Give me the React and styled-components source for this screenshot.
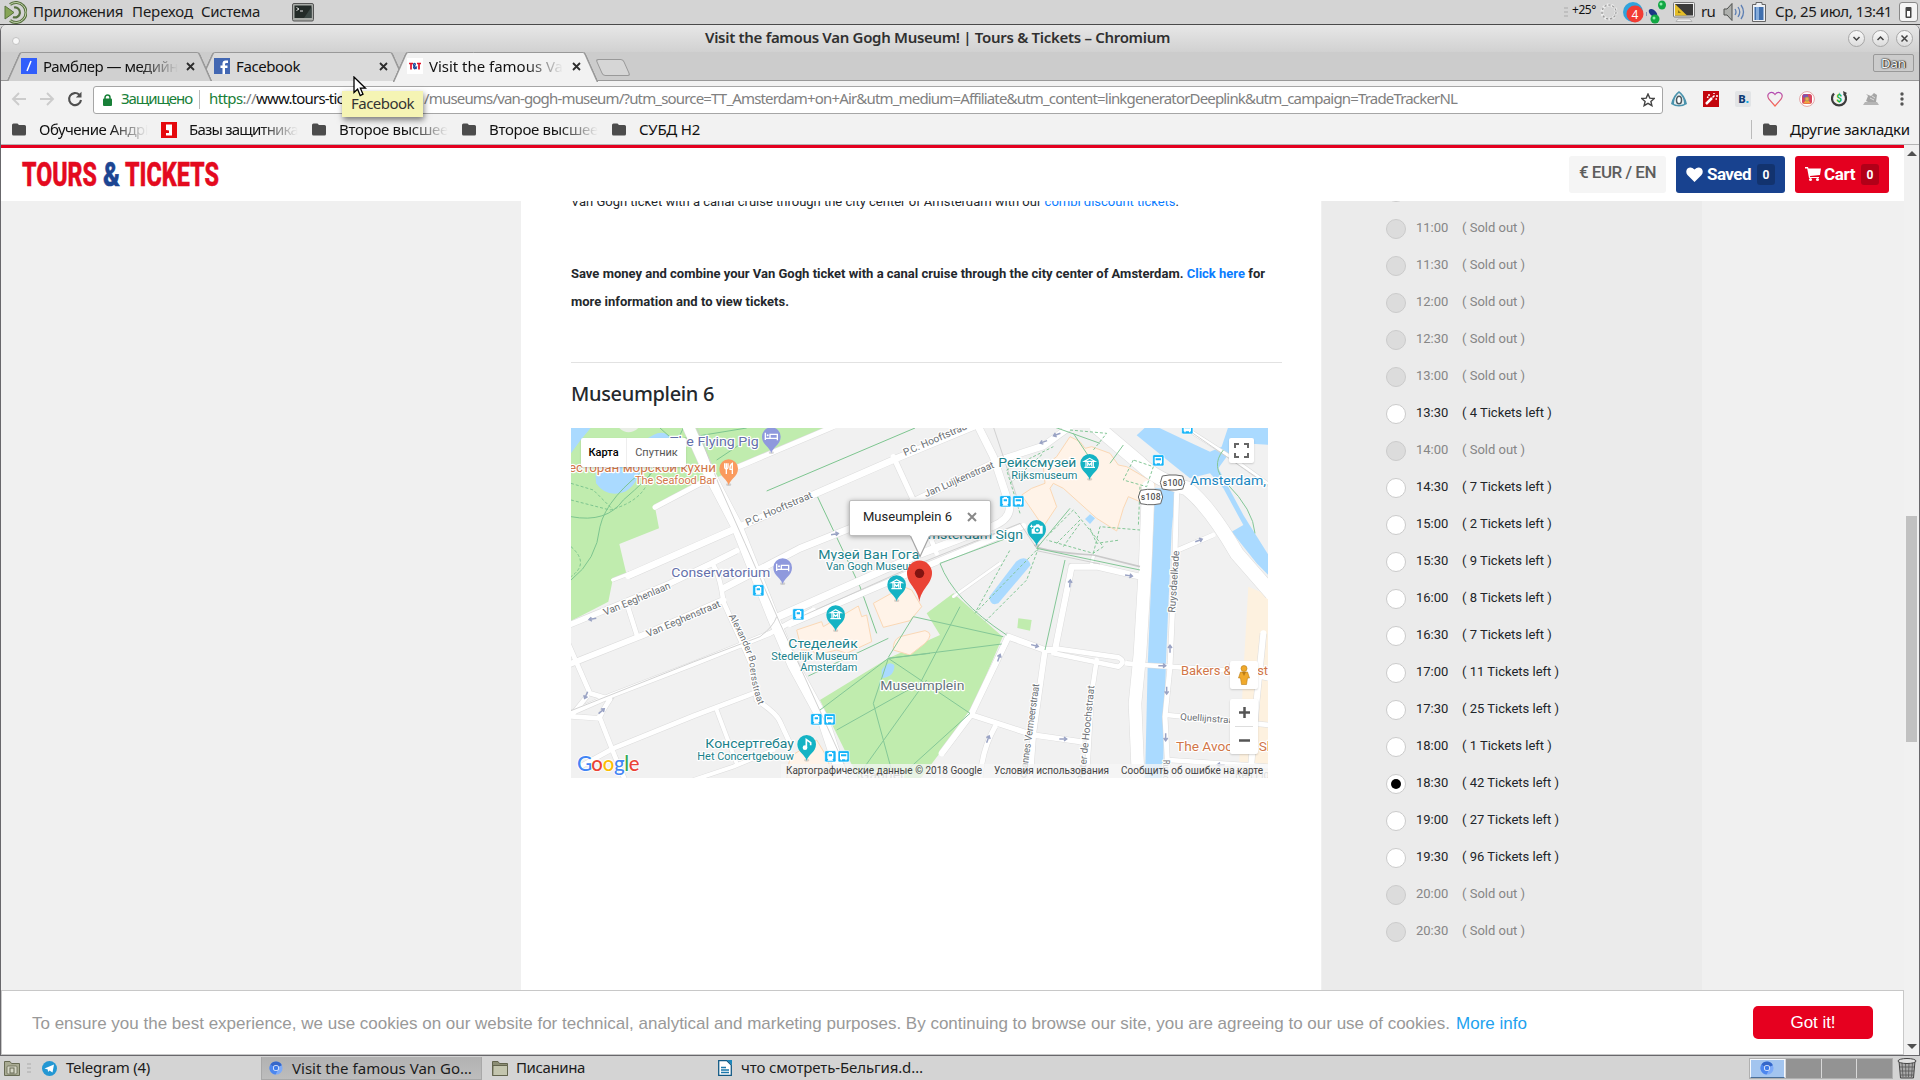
import React, { useLayoutEffect, useRef, useState } from "react";
import styled, { createGlobalStyle, css } from "styled-components";

const UI = `"Noto Sans", "Open Sans", sans-serif`;
const WEB = `Roboto, "Liberation Sans", sans-serif`;

const Global = createGlobalStyle`
  * { box-sizing: border-box; }
  html, body { margin: 0; padding: 0; }
  body { width: 1920px; height: 1080px; overflow: hidden; background: #d4d4d4; }
  p, h2 { margin: 0; }
`;

/* ---------- text that keeps a given width ---------- */
const FitBox = styled.span`
  display: block;
  flex: none;
  width: ${(p) => p.$w}px;
  white-space: pre;
  overflow: visible;
  ${(p) => p.$fade && css`
    overflow: hidden;
    mask-image: linear-gradient(to right, #000 calc(100% - 38px), transparent);
  `}
`;
const FitInner = styled.span`
  display: inline-block;
  white-space: pre;
`;
function Fit({ w, children, fade, className }) {
  const ref = useRef(null);
  const [spacing, setSpacing] = useState(0);
  useLayoutEffect(() => {
    const el = ref.current;
    const natural = el.getBoundingClientRect().width;
    setSpacing((w - natural) / el.textContent.length);
  }, [w]);
  return (
    <FitBox $w={w} $fade={fade} className={className}>
      <FitInner ref={ref} style={{ letterSpacing: spacing }}>{children}</FitInner>
    </FitBox>
  );
}

/* ---------- desktop ---------- */
const Desktop = styled.div`
  width: 1920px;
  height: 1080px;
  display: flex;
  flex-direction: column;
  background: #d4d4d4;
  font-family: ${UI};
  position: relative;
`;
const Panel = styled.div`
  height: ${(p) => p.$h}px;
  flex: none;
  display: flex;
  align-items: center;
  background: #d4d4d4;
  color: #1c1c1c;
  font-size: 15px;
  line-height: 22px;
  & > span { padding-bottom: 2px; }
`;
const MenuPanel = styled(Panel)`
  border-bottom: 1px solid #4a4a4a;
  padding-left: 4px;
  position: relative;
`;
const MenuItem = styled(Fit)`
  margin-left: ${(p) => p.gap}px;
`;
const Push = styled.div`flex: 1;`;
const Gap = styled.div`flex: none; width: ${(p) => p.$w}px;`;
const Icon = styled.svg`
  flex: none;
  display: block;
  width: ${(p) => p.$w || 16}px;
  height: ${(p) => p.$h || p.$w || 16}px;
`;
const TinyText = styled(Fit)`font-size: 12px; line-height: 18px; padding-bottom: 4px !important; color: #111;`;

/* ---------- window ---------- */
const Window = styled.div`
  height: 1031px;
  flex: none;
  display: flex;
  flex-direction: column;
  border: solid #68676b;
  border-width: 0 1px 1px 1px;
  border-radius: 6px 6px 0 0;
  overflow: hidden;
  background: #f2f2f2;
`;
const TitleBar = styled.div`
  height: 27px;
  flex: none;
  display: flex;
  align-items: center;
  background: linear-gradient(#e7e7e7, #d1d1d1);
  padding: 0 6px 0 11px;
`;
const TitleDot = styled.div`
  width: 8px; height: 8px; border-radius: 50%;
  background: #f8f8f8; border: 1px solid #c2c2c2; margin-top: 4px;
`;
const Title = styled(Fit)`
  margin-left: 685px;
  padding-bottom: 4px;
  font-size: 15px;
  font-weight: 600;
  line-height: 22px;
  color: #303030;
`;
const WinButton = styled.div`
  width: 17px; height: 17px; margin-left: 7px;
  border-radius: 50%;
  border: 1px solid #a6a6a6;
  background: linear-gradient(#fafafa, #dcdcdc);
  display: flex; align-items: center; justify-content: center;
`;
const TabStrip = styled.div`
  height: 29px;
  flex: none;
  display: flex;
  background: #ccc;
  border-bottom: 1px solid #999;
  padding: 0 5px 0 6px;
`;
const Tab = styled.div`
  width: 193px;
  height: 29px;
  position: relative;
  display: flex;
  align-items: center;
  padding: 0 0 1px 14px;
  font-size: 15px;
  line-height: 28px;
  color: #111;
  z-index: ${(p) => p.$z};
  &::before, &::after {
    content: "";
    position: absolute;
    z-index: -1;
    top: 0;
    height: ${(p) => (p.$active ? 29 : 28)}px;
    border-top: 1px solid #999;
    background: ${(p) => (p.$active ? "#f2f2f2" : p.$hover ? "#dadada" : "#d0d0d0")};
  }
  &::before { left: 6px; width: 110px; border-left: 2px solid #999; transform: skewX(-24deg); border-top-left-radius: 3px; }
  &::after { right: -6px; width: 110px; border-right: 2px solid #999; transform: skewX(24deg); border-top-right-radius: 3px; }
`;
const TabTitle = styled(Fit)`margin-left: 6px;`;
const NewTab = styled.div`
  width: 28px; height: 17px; margin: 7px 0 0 13px;
  border: 1px solid #999; border-radius: 3px;
  background: #d6d6d6;
  transform: skewX(24deg);
`;
const Profile = styled.div`
  width: 41px; height: 18px; margin-top: 2px;
  border: 1px solid #999; border-radius: 2px;
  color: #f4f4f4; font-size: 13px; line-height: 16px; text-align: center;
  text-shadow: 0 0 1px #222, 0 0 2px #222, 1px 0 1px #333;
`;
const Toolbar = styled.div`
  height: 36px;
  flex: none;
  display: flex;
  align-items: center;
  padding: 0 0 0 10px;
  background: #f2f2f2;
`;
const Omnibox = styled.div`
  width: 1570px; height: 28px; margin: 1px 8px 0 10px;
  border: 1px solid #a6a6a6; border-radius: 3px;
  background: #fff;
  display: flex; align-items: center;
  padding: 0 7px 0 9px;
  font-size: 15px; line-height: 22px;
  color: #808080;
  & > span { padding-bottom: 3px; }
`;
const Secure = styled(Fit)`margin-left: 9px; color: #188038;`;
const Scheme = styled(Fit)`b { font-weight: 400; color: #188038; }`;
const Host = styled(Fit)`color: #111;`;
const Rule = styled.div`
  width: 1px; height: ${(p) => p.$h}px; background: #bbb; flex: none;
  margin: 0 ${(p) => p.$r}px 0 ${(p) => p.$l}px;
`;
const Extensions = styled.div`
  display: flex; align-items: center; gap: 16px;
`;
const BookmarkBar = styled.div`
  height: 28px;
  flex: none;
  display: flex;
  align-items: center;
  padding: 0 9px 2px 11px;
  font-size: 15px;
  line-height: 22px;
  color: #111;
  border-bottom: 1px solid #b4b4b4;
  & > span { padding-bottom: 2px; }
`;
const BookmarkText = styled(Fit)`margin: 0 14px 0 13px;`;
const SiteIcon = styled(Icon)`margin: 0 -1px;`;

/* ---------- page ---------- */
const Viewport = styled.div`
  flex: 1;
  display: flex;
  min-height: 0;
`;
const Page = styled.div`
  width: 1903px;
  display: flex;
  flex-direction: column;
  background: #f0f0f0;
  font-family: ${WEB};
`;
const SiteHeader = styled.header`
  height: 56px;
  flex: none;
  border-top: 3px solid #e4001f;
  background: #fff;
  display: flex;
  align-items: flex-start;
  padding: 8px 15px 0 21px;
`;
const Logo = styled.svg`display: block; width: 198px; height: 26px; margin-top: 5px; overflow: visible;`;
const HeaderButton = styled.div`
  width: ${(p) => p.$w}px; height: 37px;
  margin-left: 10px;
  border-radius: 3px;
  background: ${(p) => p.$bg};
  color: ${(p) => p.$fg || "#fff"};
  display: flex; align-items: center;
  padding: 0 10px ${(p) => (p.$fg ? 5 : 1)}px;
  font-size: 17px; font-weight: ${(p) => (p.$fg ? 500 : 700)};
  line-height: 30px;
`;
const Count = styled.span`
  width: 18px; height: 21px; margin-left: auto;
  border-radius: 3px;
  background: rgba(0, 0, 0, 0.22);
  font-size: 12px; line-height: 22px; text-align: center;
`;
const Columns = styled.div`
  height: 789px;
  flex: none;
  display: flex;
  padding-left: 520px;
  overflow: hidden;
`;
const Article = styled.main`
  width: 800px;
  background: #fff;
  padding: 0 39px 0 50px;
  color: #24282c;
`;
const Para = styled.p`
  height: 28px;
  margin-top: ${(p) => p.$mt || 0}px;
  font-size: 13px;
  line-height: 28px;
  font-weight: ${(p) => (p.$bold ? 700 : 400)};
  white-space: nowrap;
`;
const Link = styled.a`color: #0a7cff;`;
const Divider = styled.div`height: 1px; background: #e2e2e2; margin-top: 46px;`;
const Heading = styled.h2`
  margin-top: 17px;
  font-family: ${UI};
  font-size: 20px; line-height: 28px; font-weight: 500;
`;
const MapBox = styled.div`
  position: relative;
  width: 697px; height: 350px; margin-top: 20px;
  overflow: hidden;
  font-family: ${WEB};
`;
const MapSvg = styled.svg`display: block; width: 697px; height: 350px;`;
const MapControl = styled.div`
  position: absolute;
  left: ${(p) => p.$x}px; top: ${(p) => p.$y}px;
  width: ${(p) => p.$w}px; height: ${(p) => p.$h}px;
  background: #fff; border-radius: 2px;
  box-shadow: 0 1px 2px rgba(0, 0, 0, 0.16);
  display: flex; flex-direction: ${(p) => (p.$col ? "column" : "row")};
  align-items: center; justify-content: center;
  font-size: 11px; color: #565656;
`;
const TypeButton = styled.div`
  width: ${(p) => p.$w}px; height: 29px; line-height: 29px;
  text-align: center;
  ${(p) => p.$on && css`color: #000; font-weight: 500; border-right: 1px solid #eee;`}
`;
const ZoomDivider = styled.div`width: 18px; height: 1px; background: #ddd; margin: 8px 0;`;
const InfoWindow = styled(MapControl)`
  border: 1px solid #bdbdbd;
  box-shadow: 0 1px 5px rgba(0, 0, 0, 0.35);
  justify-content: flex-start;
  padding: 0 12px 3px 13px;
  color: #222;
  font-size: 13px;
  gap: 15px;
`;
const Tail = styled.svg`
  position: absolute;
  left: 336px; top: 105px;
  width: 28px; height: 26px;
`;
const Attribution = styled.div`
  position: absolute;
  right: 0; bottom: 0;
  height: 14px; width: 487px;
  background: rgba(245, 245, 245, 0.75);
  display: flex; align-items: center; gap: 12px;
  padding-left: 5px;
  font-size: 10px; color: #444; line-height: 14px;
`;
const Sidebar = styled.aside`
  width: 380px;
  margin-left: 1px;
  background: #ebebeb;
  padding: 0 0 0 64px;
`;
const Slots = styled.div`
  display: flex; flex-direction: column; gap: 17px;
  margin-top: -19px;
`;
const Slot = styled.div`
  height: 20px;
  display: flex; align-items: center;
  font-size: 13px; line-height: 16px;
  color: ${(p) => (p.$off ? "#868686" : "#212529")};
  & > span { margin-bottom: 2px; }
`;
const Radio = styled.i`
  width: 20px; height: 20px; margin-right: 10px;
  border-radius: 50%;
  border: 1px solid #cbcbcb;
  background: ${(p) => (p.$off ? "#dcdcdc" : "#fff")};
  display: flex; align-items: center; justify-content: center;
  &::after {
    content: "";
    width: 10px; height: 10px; border-radius: 50%;
    background: ${(p) => (p.$on ? "#000" : "transparent")};
  }
`;
const Time = styled.span`width: 46px;`;
const CookieBar = styled.div`
  height: 65px;
  flex: none;
  background: #fff;
  border: 1px solid #c8c8c8;
  display: flex; align-items: center;
  padding: 3px 30px 0 30px;
  font-family: "Liberation Sans", sans-serif;
  font-size: 17px;
  color: #999;
`;
const MoreInfo = styled(Fit)`margin-left: 6px; color: #21a2ef;`;
const GotIt = styled.div`
  width: 120px; height: 33px; margin: 0 0 4px auto;
  padding-top: 1px;
  border-radius: 5px; background: #e6001f; color: #fff;
  display: flex; align-items: center; justify-content: center;
`;
const Scrollbar = styled.div`
  width: 15px;
  background: #f1f1f1;
  display: flex; flex-direction: column; align-items: center;
  padding: 6px 0 6px;
`;
const Thumb = styled.div`
  width: 11px; height: 226px; margin: 360px 0 auto; background: #c1c1c1;
`;
const Arrow = styled.div`
  border: 5px solid transparent;
  ${(p) => (p.$up ? "border-bottom-color: #505050; border-top: 0;" : "border-top-color: #505050; border-bottom: 0;")}
`;

/* ---------- bottom panel ---------- */
const Task = styled.div`
  height: 23px; width: ${(p) => p.$w}px;
  display: flex; align-items: center; gap: ${(p) => p.$gap || 10}px;
  padding-left: ${(p) => p.$pl || 0}px;
  & > span { padding-bottom: 2px; }
  ${(p) => p.$active && css`
    background: linear-gradient(#b2b2b2, #bdbdbd);
    border: 1px solid #a8a8a8;
    border-top: 0;
    & > span { padding-bottom: 0; }
  `}
`;
const Workspaces = styled.div`
  width: 144px; height: 21px;
  display: grid; grid-template-columns: repeat(4, 1fr); gap: 1px;
  background: #d8d8d8; border: 1px solid #b0b0b0;
`;
const Workspace = styled.div`
  background: ${(p) => (p.$on ? "#a3c5ef" : "#939393")};
  ${(p) => p.$on && css`border: 1px solid #f6f9fd; border-bottom-color: #4a6f99;`}
  display: flex; align-items: center; justify-content: center;
`;

/* ---------- overlays ---------- */
const Tooltip = styled.div`
  position: absolute; left: 342px; top: 91px; z-index: 10;
  width: 81px; height: 26px; padding-left: 9px;
  background: #f5f4b4; color: #333;
  font-size: 15px; line-height: 24px;
  box-shadow: 1px 3px 6px rgba(0, 0, 0, 0.5);
`;
const Cursor = styled.svg`
  position: absolute; left: 353px; top: 76px; z-index: 11;
  width: 14px; height: 21px;
`;

/* ---------- icons ---------- */
const FolderIcon = () => (
  <Icon $w={14} $h={13} viewBox="0 0 14 13"><path d="M0 2Q0 .5 1.500.5H5.500L7 2H12.500Q14 2 14 3.500V11Q14 12.500 12.500 12.500H1.500Q0 12.500 0 11Z" fill="#4c4c4c" /></Icon>
);
const CloseX = () => (
  <Icon $w={9} viewBox="0 0 9 9"><path d="M1 1L8 8M8 1L1 8" stroke="#2c2c2c" strokeWidth="1.800" /></Icon>
);
const ChromiumIcon = ({ size }) => (
  <Icon $w={size} viewBox="0 0 16 16">
    <circle cx="8" cy="8" r="7.500" fill="#7eabf8" />
    <path d="M8 8L1.500 4.500A7.500 7.500 0 0 1 14.700 4.800Z" fill="#3567c9" />
    <path d="M8 8L1.500 4.200A7.500 7.500 0 0 0 7.600 15.500L10.500 9.500Z" fill="#4c86ee" />
    <circle cx="8" cy="8" r="3.500" fill="#e3ecfb" /><circle cx="8" cy="8" r="2.600" fill="#3f7be6" />
  </Icon>
);
const MateIcon = () => (
  <Icon $w={23} viewBox="0 0 23 23" fill="none" stroke="#6d8a4f" strokeWidth="2.200">
    <path d="M1 5V18L10 11.500Z" fill="#87a556" stroke="#59743d" strokeWidth="1" />
    <path d="M6 3.500A10 10 0 1 1 6 19.500" stroke="#56703e" strokeWidth="3" />
    <path d="M6 3.500A10 10 0 1 1 6 19.500" stroke="#c5d6ae" strokeWidth="1" />
    <path d="M10 6.500A5 5 0 1 1 9 16" stroke="#56703e" />
  </Icon>
);
const TerminalIcon = () => (
  <Icon $w={22} $h={19} viewBox="0 0 22 19">
    <rect x=".5" y=".5" width="21" height="17.500" rx="1.500" fill="#a9aca8" stroke="#555" />
    <rect x="2.500" y="2.500" width="17" height="12.500" fill="#232b28" />
    <path d="M4.500 4.500L7 6L4.500 7.500M8 8H11" stroke="#e5e5e5" fill="none" />
    <path d="M12 15L19.500 4V15Z" fill="#3b4744" />
  </Icon>
);

/* ---------- map ---------- */
const Halo = styled.text`
  paint-order: stroke;
  stroke: #fff;
  stroke-width: 7px;
  stroke-linejoin: round;
  font-family: ${WEB};
  font-size: ${(p) => p.$s}px;
  fill: ${(p) => p.$c};
`;
const Label = ({ x, y, w, s, c, children, ...rest }) => (
  <Halo x={x} y={y} textLength={w} lengthAdjust="spacingAndGlyphs" $s={s} $c={c} {...rest}>{children}</Halo>
);
const Pin = ({ x, y, c, children }) => (
  <g transform={`translate(${x} ${y})`}>
    <ellipse cx="0" cy="48" rx="8" ry="4" fill="#000" opacity=".15" />
    <path d="M0 50C-3 32-28 24-28 0A28 28 0 0 1 28 0C28 24 3 32 0 50Z" fill={c} />
    {children}
  </g>
);
const Museum = () => (
  <g fill="none" stroke="#fff" strokeWidth="3.500">
    <path d="M-16 -6L0 -15L16 -6ZM-11 -4V11M11 -4V11M-16 12H16M-6 9V-2L0 5L6 -2V9" />
  </g>
);
const Bed = () => (
  <g fill="none" stroke="#fff" strokeWidth="4"><path d="M-18 -12V10M-18 5H18V-7H-4V4M18 5V11" /><circle cx="-11" cy="-4" r="3" fill="#fff" stroke="none" /></g>
);
const Stop = ({ x, y, bus }) => (
  <g transform={`translate(${x} ${y})`}>
    <rect x="-17" y="-17" width="34" height="34" rx="4" fill="#14b4f8" stroke="#fff" strokeWidth="2" />
    {bus
      ? <path d="M-11 -10H11V9H-11ZM-8 -6V0H8V-6ZM-9 9V12H-5V9M5 9V12H9V9" fill="#fff" fillRule="evenodd" />
      : <path d="M-5 -13H5V-10H9V7L6 9L9 13H-9L-6 9L-9 7V-10H-5ZM-5 -6V0H5V-6Z" fill="#fff" fillRule="evenodd" />}
  </g>
);
const Arr = ({ x, y, r }) => (
  <path transform={`translate(${x} ${y}) rotate(${r})`} d="M-12 0H10M2 -6L10 0L2 6" fill="none" stroke="#9aa3c4" strokeWidth="4.500" />
);

const ROADS = [
  ["M205 467L540 320L1010 115L1240 20", 20],
  ["M285 262L440 180M500 155L560 130L820 20", 15],
  ["M20 618L330 490L455 430L530 392", 17],
  ["M158 480L210 460", 10],
  ["M490 505L720 385L870 325L1070 240L1320 120L1450 78L1530 20", 20],
  ["M20 736L250 645L490 540", 18],
  ["M20 885L150 828L400 732L630 640L760 570", 15],
  ["M650 592L1080 402L1300 318Q1355 295 1348 255L1300 110L1255 20", 22],
  ["M690 612L1080 446L1390 318", 18],
  ["M455 430Q480 460 490 545L560 700Q590 760 590 840Q650 880 660 905L690 970", 14],
  ["M20 660L90 820L150 838Q128 870 118 895L20 888M40 880L80 830", 14],
  ["M118 890L165 1010L195 1080", 14],
  ["M60 1040L160 985L400 888L580 820", 14],
  ["M470 870L530 1030", 12],
  ["M205 565L232 650", 14],
  ["M400 1080L520 1040L640 990", 12],
  ["M1000 110L1060 240", 16],
  ["M1110 350L1130 400", 14],
  ["M1180 530L1320 430", 8],
  ["M385 20L450 165L530 318L640 595L700 735L790 900L850 1080", 34],
];
const ROADS_R = [
  ["M95 1000L185 880L295 650L405 690L435 690L485 440L560 440L690 470", 18],
  ["M185 885L370 945L510 965", 16],
  ["M255 920Q215 990 210 1080", 15],
  ["M435 685L625 712Q650 725 625 740L430 700", 14],
  ["M560 720L545 820L530 1080", 14],
  ["M405 690L370 940L360 1080", 17],
  ["M545 430L552 400", 10],
  ["M800 220L795 400L780 740L765 890L775 1080", 15],
  ["M800 392L910 345", 14],
  ["M700 735L960 752L1074 775M650 730L700 735", 14],
  ["M770 885L1080 915M775 1020L1080 1040", 14],
  ["M1060 640L1040 840L1020 1080", 18],
  ["M560 20L690 130Q740 180 830 205Q900 260 980 400L1085 520", 42],
  ["M715 200L705 450L690 700L675 850L685 1085", 38],
  ["M820 20L960 110L1085 200", 10],
];

function CityMap() {
  const teal = "#1a828b", grey = "#6b6f74", orange = "#d17648", violet = "#6570ab";
  return (
    <MapSvg viewBox="33 24 2091 1050">
      <rect x="33" y="24" width="2100" height="1060" fill="#f1f1f1" />
      <path d="M33 24H800L560 130L285 262L297 325L178 372L200 465L158 480L145 545L33 603Z" fill="#c0ecae" />
      <path d="M178 24Q205 50 235 24Z" fill="#e9eee6" />
      <g fill="#aadaff">
        <path d="M33 100Q60 60 92 24H33Z" />
        <path d="M105 130Q140 150 150 110L200 90L280 45Q310 30 330 50L250 110Q240 190 195 215Q140 235 108 190Z" />
      </g>
      <g fill="none" stroke="#7dc58f" strokeWidth="3">
        <path d="M33 290Q140 310 190 240Q330 120 370 24M33 480Q110 420 120 320Q140 230 280 130M300 24L340 60L560 24M560 60L470 120M620 213L1065 24M770 225L900 500L950 640" />
        <path d="M33 240L150 270Q260 240 270 160M33 380Q90 430 33 470M33 190L100 210L160 270" strokeDasharray="9 6" />
      </g>
      <path d="M985 715L780 840L900 1084H1075L1230 880L1328 650L1180 520L1100 580L1140 645Z" fill="#c0ecae" />
      <path d="M965 750Q985 720 1003 735Q1005 770 965 775Z" fill="#aadaff" />
      <g fill="#fff3e8" stroke="#fbd8b5" strokeWidth="3">
        <path d="M710 630L785 605L790 620L895 558L905 590L920 585L935 665L860 700L830 690L770 705L755 690L725 690Z" />
        <path d="M940 550L1030 500L1055 510L1085 560L1050 602L970 622Z" />
        <path d="M1000 690Q998 660 1020 650L1095 632Q1125 640 1095 670L1050 705Z" />
        <path d="M680 1074L690 1010L770 960L800 1010L820 1074Z" />
      </g>
      <g transform="translate(1050 0)">
        <g fill="#fff3e8" stroke="#fbd8b5" strokeWidth="3">
          <path d="M480 50L510 65L525 85L545 80L600 100L625 135L650 140L735 190L725 255L690 245L655 230L640 265L620 333L560 295L460 205L430 190L420 205L440 260L400 320L345 240L335 225L365 205L405 190L400 140L440 110Z" />
          <path d="M1015 500L1085 530V1084H985L1000 760Z" fill="#fdf1df" stroke="none" />
        </g>
        <path d="M325 595L365 600L360 632L322 624Z" fill="#c0ecae" />
        <g fill="#aadaff">
          <path d="M735 205H797L785 330L768 720L758 1084H705L713 740Z" />
          <path d="M680 46L708 20H740L850 72L900 95L935 80L955 20H1085V75L1000 70L950 110L925 145L1000 285L1085 420V475L1040 430L965 335L1000 315L940 205L900 160L840 175L790 135Z" />
          <path d="M318 425Q350 400 362 435L265 550Q240 560 238 530Z" />
          <path d="M540 283L555 295L540 312L525 297Z" />
        </g>
      </g>
      <g fill="none" stroke="#dcdcdc">
        {ROADS.map(([d, w]) => <path key={d} d={d} strokeWidth={w + 3} />)}
        <g transform="translate(1050 0)">{ROADS_R.map(([d, w]) => <path key={d} d={d} strokeWidth={w + 3} />)}</g>
      </g>
      <g fill="none" stroke="#fff" strokeLinejoin="round" strokeLinecap="round">
        {ROADS.map(([d, w]) => <path key={d} d={d} strokeWidth={w} />)}
        <g transform="translate(1050 0)">{ROADS_R.map(([d, w]) => <path key={d} d={d} strokeWidth={w} />)}</g>
      </g>
      <g fill="none" stroke="#c9c9c9" strokeWidth="2.500">
        <path d="M410 20L475 190L555 370L660 610L720 740L860 1050M33 872L400 726L600 650Q640 620 650 590M700 600L1080 430L1380 310L1430 385M1430 392L1620 432" />
        <path d="M1430 380Q1460 395 1600 405L1740 440" strokeWidth="5" />
        <path d="M1870 20L2000 110L2130 200M1300 20L1370 230" />
      </g>
      <g fill="none" stroke="#84c797" strokeWidth="3">
        <path d="M985 715L780 870M985 715L940 850L1000 1070M985 715L1230 880L1020 1070M985 715L1325 672M1330 650L1060 590L985 712M830 930L1080 790L1200 560M900 1060L1100 780M1140 430Q1180 540 1340 645M1140 430L1380 340M1430 385L1530 265M1430 385L1740 450M1515 420L1455 690M985 715L1110 700M745 768L985 655M1540 40L1600 130M1690 75L1650 130M1480 20L1620 70M1990 90Q1950 140 2000 190Q2080 270 2085 340" />
        <path d="M1245 580L1435 385L1400 480L1275 605M1250 570L1350 390M1460 350L1540 270L1630 380L1600 400L1460 360M1490 370L1560 300M1510 380L1560 310M1600 400L1620 320L1740 330M1380 280L1340 150L1480 80M1350 190L1450 100M1530 30L1640 40L1600 90M1720 120L1690 180L1760 200L1780 140ZM1740 200L1735 320M1590 325L1610 370L1680 360" strokeDasharray="9 6" />
      </g>

      <g>
        <Arr x={97} y={597} r={170} /><Arr x={78} y={826} r={115} /><Arr x={125} y={873} r={-40} /><Arr x={825} y={342} r={-10} />
        <Arr x={1450} y={66} r={160} /><Arr x={1490} y={44} r={160} /><Arr x={1530} y={490} r={-85} /><Arr x={1707} y={467} r={8} />
        <Arr x={1917} y={361} r={-20} /><Arr x={1425} y={677} r={15} /><Arr x={1317} y={713} r={-70} /><Arr x={1284} y={957} r={-70} />
        <Arr x={1510} y={957} r={0} /><Arr x={1807} y={737} r={0} /><Arr x={1830} y={686} r={-90} /><Arr x={1820} y={812} r={90} />
        <Arr x={1817} y={952} r={90} /><Arr x={1982} y={1034} r={180} />
      </g>

      <Label x="0" y="0" w={215} s={30} c={grey} transform="translate(562 318) rotate(-23.500)">P.C. Hooftstraat</Label>
      <Label x="0" y="0" w={215} s={30} c={grey} transform="translate(1035 108) rotate(-23.500)">P.C. Hooftstraat</Label>
      <Label x="0" y="0" w={225} s={30} c={grey} transform="translate(1098 232) rotate(-23.500)">Jan Luijkenstraat</Label>
      <Label x="0" y="0" w={215} s={30} c={grey} transform="translate(135 587) rotate(-22.500)">Van Eeghenlaan</Label>
      <Label x="0" y="0" w={238} s={30} c={grey} transform="translate(264 652) rotate(-23)">Van Eeghenstraat</Label>
      <path id="boers" d="M506 588Q548 665 568 720Q572 800 598 860" fill="none" />
      <Halo $s={28} $c={grey}><textPath href="#boers" textLength="285" lengthAdjust="spacingAndGlyphs">Alexander Boersstraat</textPath></Halo>
      <Label x="0" y="0" w={186} s={30} c={grey} transform="translate(1845 578) rotate(-86)">Ruysdaelkade</Label>
      <Label x="0" y="0" w={300} s={30} c={grey} transform="translate(1396 1090) rotate(-82)">Johannes Vermeerstraat</Label>
      <Label x="0" y="0" w={290} s={30} c={grey} transform="translate(1573 1086) rotate(-84)">Pieter de Hoochstraat</Label>
      <Label x="0" y="0" w={170} s={28} c={grey} transform="translate(1860 899) rotate(4)">Quellijnstraat</Label>
      <Label x="0" y="0" w={60} s={26} c={grey} transform="translate(1810 1020) rotate(90)">Ruysd</Label>

      <Label x={330} y={78} w={266} s={39} c={violet}>The Flying Pig</Label>
      <Label x={2} y={157} w={466} s={36} c={orange}>Ресторан морской кухни</Label>
      <Label x={225} y={192} w={243} s={33} c={orange}>The Seafood Bar</Label>
      <Label x={334} y={472} w={297} s={40} c={violet}>Conservatorium</Label>
      <Label x={775} y={417} w={303} s={40} c={teal}>Музей Ван Гога</Label>
      <Label x={798} y={449} w={275} s={32} c={teal}>Van Gogh Museum</Label>
      <Label x={685} y={685} w={208} s={40} c={teal}>Стеделейк</Label>
      <Label x={634} y={719} w={259} s={33} c={teal}>Stedelijk Museum</Label>
      <Label x={721} y={752} w={171} s={33} c={teal}>Amsterdam</Label>
      <Label x={961} y={811} w={252} s={40} c="#66747c">Museumplein</Label>
      <Label x={436} y={985} w={266} s={40} c={teal}>Консертгебау</Label>
      <Label x={412} y={1020} w={290} s={33} c={teal}>Het Concertgebouw</Label>
      <Label x={1315} y={142} w={234} s={39} c={teal}>Рейксмузей</Label>
      <Label x={1354} y={177} w={198} s={33} c={teal}>Rijksmuseum</Label>
      <Label x={1058} y={357} w={331} s={39} c={teal}>I amsterdam Sign</Label>
      <Label x={1890} y={195} w={228} s={38} c="#1a86bf">Amsterdam,</Label>
      <Label x={1863} y={764} w={315} s={39} c={orange}>Bakers & Roasters</Label>
      <Label x={1848} y={994} w={295} s={39} c={orange}>The Avocado Sh</Label>
      <Label x={900} y={1078} w={130} s={30} c="#999">Gabriel</Label>
      <Label x={2025} y={1078} w={130} s={36} c="#999">Red Light</Label>

      <Pin x={634} y={50} c="#8f99dd"><Bed /></Pin>
      <Pin x={668} y={443} c="#8f99dd"><Bed /></Pin>
      <Pin x={506} y={146} c="#fa9b5f"><path d="M-12 -16V-4Q-12 1 -7 1V16M-2 -16V-4Q-2 1 -7 1V-16M11 16V-16Q3 -12 4 2H11" fill="none" stroke="#fff" strokeWidth="4" /></Pin>
      <Pin x={1010} y={494} c="#15b3c4"><Museum /></Pin>
      <Pin x={827} y={584} c="#15b3c4"><Museum /></Pin>
      <Pin x={1589} y={130} c="#15b3c4"><Museum /></Pin>
      <Pin x={1430} y={328} c="#15b3c4">
        <path d="M-10 -11H-4L-1 -15H7L10 -11H18V13H-15V-2H-10Z" fill="#fff" /><circle cx="2" cy="2" r="6" fill="none" stroke="#15b3c4" strokeWidth="4" /><path d="M-20 -9H-11M-15.500 -14V-5" stroke="#fff" strokeWidth="3" />
      </Pin>
      <Pin x={740} y={973} c="#15b3c4"><circle cx="-5" cy="10" r="7" fill="#fff" /><path d="M-1 10V-14L12 -5V3" fill="none" stroke="#fff" strokeWidth="5" /></Pin>

      <Stop x={595} y={511} /><Stop x={715} y={583} /><Stop x={769} y={898} /><Stop x={809} y={898} bus />
      <Stop x={811} y={1009} /><Stop x={851} y={1009} bus /><Stop x={1336} y={244} /><Stop x={1375} y={244} bus />
      <Stop x={1795} y={121} bus /><Stop x={1882} y={25} bus />
      <g fill="#fff" stroke="#666" strokeWidth="3">
        <path d="M1742 211L1762 208H1782L1802 211L1808 231L1802 251L1782 254H1762L1742 251L1735 231Z" />
        <path d="M1807 168L1827 165H1848L1868 168L1874 188L1868 207L1848 210H1827L1807 207L1801 188Z" />
      </g>
      <text x="1742" y="240" fontSize="26" fontFamily={WEB} fontWeight="500" fill="#555" textLength="60">s108</text>
      <text x="1808" y="197" fontSize="26" fontFamily={WEB} fontWeight="500" fill="#555" textLength="60">s100</text>

      <g fontFamily="Lato, Roboto, sans-serif" fontSize="61" stroke="#fff" strokeWidth="5" paintOrder="stroke" fontWeight="500">
        <text x="51" y="1053" fill="#4285f4" fontSize="63">G</text>
        <text x="94" y="1053" fill="#ea4335">o</text>
        <text x="128" y="1053" fill="#fbbc05">o</text>
        <text x="162" y="1053" fill="#4285f4">g</text>
        <text x="193" y="1053" fill="#34a853">l</text>
        <text x="206" y="1053" fill="#ea4335">e</text>
      </g>

      <path d="M1078 546C1074 506 1041 492 1041 459A37 37 0 0 1 1116 459C1116 492 1083 506 1078 546Z" fill="#ea4335" />
      <circle cx="1078.500" cy="460" r="14" fill="#811411" />
    </MapSvg>
  );
}

/* ---------- data ---------- */
const SLOTS = [
  ["10:30", 0], ["11:00", 0], ["11:30", 0], ["12:00", 0], ["12:30", 0], ["13:00", 0], ["13:30", 4], ["14:00", 0],
  ["14:30", 7], ["15:00", 2], ["15:30", 9], ["16:00", 8], ["16:30", 7], ["17:00", 11], ["17:30", 25],
  ["18:00", 1], ["18:30", 42], ["19:00", 27], ["19:30", 96], ["20:00", 0], ["20:30", 0],
];

function TopPanel() {
  return (
    <MenuPanel $h={25}>
      <MateIcon />
      <MenuItem w={90} gap={6}>Приложения</MenuItem>
      <MenuItem w={61} gap={9}>Переход</MenuItem>
      <MenuItem w={59} gap={8}>Система</MenuItem>
      <Gap $w={32} />
      <TerminalIcon />
      <Push />
      <Icon $w={4} $h={10} viewBox="0 0 4 10"><path d="M0 1H4M0 5H4M0 9H4" stroke="#aaa" /></Icon>
      <Gap $w={4} />
      <TinyText w={24}>+25°</TinyText>
      <Gap $w={4} />
      <Icon $w={18} viewBox="0 0 18 18"><circle cx="9" cy="9" r="7" fill="none" stroke="#eee" strokeWidth="3" strokeDasharray="2.400 2" /><circle cx="9" cy="9" r="7" fill="none" stroke="#9a9a9a" strokeWidth="1.200" strokeDasharray="2 2" /></Icon>
      <Gap $w={5} />
      <Icon $w={21} $h={22} viewBox="0 0 21 22">
        <circle cx="10" cy="11" r="10" fill="#31a3dc" /><circle cx="12" cy="13" r="8.500" fill="#f23c34" />
        <text x="8.500" y="18" fontSize="12" fill="#fff" fontFamily="Noto Sans, sans-serif">4</text>
      </Icon>
      <Gap $w={2} />
      <Icon $w={22} $h={24} viewBox="0 0 22 24">
        <path d="M0 12V16" stroke="#39549d" /><ellipse cx="7" cy="13" rx="5" ry="3" transform="rotate(40 7 13)" fill="#1d3686" />
        <ellipse cx="16" cy="5" rx="4" ry="4.500" fill="#12a744" /><ellipse cx="9" cy="19" rx="4.500" ry="4.500" fill="#12a744" />
        <circle cx="15" cy="4" r="1.500" fill="#8af0a9" /><circle cx="8" cy="18" r="1.500" fill="#8af0a9" />
      </Icon>
      <Gap $w={5} />
      <Icon $w={22} $h={20} viewBox="0 0 22 20">
        <rect x=".5" y=".5" width="21" height="14.500" rx="1" fill="#eee" stroke="#777" /><rect x="2" y="2" width="18" height="11.500" fill="#3b3b3b" />
        <path d="M2 2L14 13.500H2Z" fill="#e4bd27" /><path d="M5 8L8 11H5Z" fill="#8b7313" /><path d="M5 17H17L19 19.500H3Z" fill="#eee" stroke="#999" strokeWidth=".6" />
      </Icon>
      <Gap $w={6} />
      <Fit w={14}>ru</Fit>
      <Gap $w={8} />
      <Icon $w={22} $h={20} viewBox="0 0 22 20">
        <path d="M1 7H4L9 1.500V18.500L4 13H1Z" fill="#aeb0ad" stroke="#4e504e" />
        <path d="M12 7Q14 10 12 13M15 5Q18.500 10 15 15M18 3Q23 10 18 17" fill="none" stroke="#5d7fb3" strokeWidth="1.300" />
      </Icon>
      <Gap $w={7} />
      <Icon $w={14} $h={20} viewBox="0 0 14 20">
        <path d="M4 .5H10V2.500H13.500V19.500H.5V2.500H4Z" fill="#eef1f5" stroke="#666" /><rect x="2.500" y="5" width="9" height="13" fill="#3f6fae" /><rect x="4" y="5" width="3" height="13" fill="#85acdb" />
      </Icon>
      <Gap $w={9} />
      <Fit w={117}>Ср, 25 июл, 13:41</Fit>
      <Gap $w={7} />
      <Icon $w={19} $h={20} viewBox="0 0 19 20"><rect x=".5" y=".5" width="18" height="19" rx="2.500" fill="#f4f4f4" stroke="#888" /><rect x="6.500" y="5" width="6" height="11" rx="1" fill="#444" /><rect x="8" y="9" width="3" height="5.500" fill="#fff" /></Icon>
      <Gap $w={2} />
    </MenuPanel>
  );
}

function Browser() {
  return (
    <>
      <TitleBar>
        <TitleDot />
        <Title w={465}>Visit the famous Van Gogh Museum! | Tours & Tickets – Chromium</Title>
        <Push />
        {["M1.500 3L4.500 6L7.500 3", "M1.500 6L4.500 3L7.500 6", "M1.500 1.500L7.500 7.500M7.500 1.500L1.500 7.500"].map((d) => (
          <WinButton key={d}><Icon $w={9} viewBox="0 0 9 9"><path d={d} fill="none" stroke="#444" strokeWidth="1.500" /></Icon></WinButton>
        ))}
      </TitleBar>
      <TabStrip>
        <Tab $z={2}>
          <Icon $w={16} viewBox="0 0 16 16"><rect width="16" height="16" fill="#315efb" /><path d="M6 13L10 3" stroke="#fff" strokeWidth="1.500" /></Icon>
          <TabTitle w={135} fade>Рамблер — медийн</TabTitle><Gap $w={8} /><CloseX />
        </Tab>
        <Tab $z={1} $hover>
          <Icon $w={16} viewBox="0 0 16 16"><rect width="16" height="16" fill="#4267b2" /><path d="M11 16V10H13.500V7.500H11V6Q11 5 12.500 5H14V2.500H11.500Q8.500 2.500 8.500 5.500V7.500H6.500V10H8.500V16Z" fill="#fff" /></Icon>
          <TabTitle w={64}>Facebook</TabTitle><Gap $w={79} /><CloseX />
        </Tab>
        <Tab $z={3} $active>
          <Icon $w={16} viewBox="0 0 16 16"><rect width="16" height="16" fill="#fff" /><path d="M2 5.500H6M4 5V11.500M10 5.500H14M12 5V11.500" stroke="#e1122a" strokeWidth="1.700" /><path d="M9.500 11L6.500 7Q6.500 5 8 5.500Q9 6.500 6.800 8.500Q6 10 7.500 10.800Q9 10.500 9.800 8.500" fill="none" stroke="#1c4a9c" strokeWidth="1.300" /></Icon>
          <TabTitle w={134} fade>Visit the famous Va</TabTitle><Gap $w={9} /><CloseX />
        </Tab>
        <NewTab />
        <Push />
        <Profile>Dan</Profile>
      </TabStrip>
      <Toolbar>
        <Icon $w={16} viewBox="0 0 16 16"><path d="M15 8H2M8 2L2 8L8 14" fill="none" stroke="#ccc" strokeWidth="1.900" /></Icon>
        <Gap $w={12} />
        <Icon $w={16} viewBox="0 0 16 16"><path d="M1 8H14M8 2L14 8L8 14" fill="none" stroke="#ccc" strokeWidth="1.900" /></Icon>
        <Gap $w={12} />
        <Icon $w={16} viewBox="0 0 16 16"><path d="M14 9A6 6 0 1 1 12.300 3.800" fill="none" stroke="#505050" strokeWidth="2.100" /><path d="M14.500 .8V6.500H8.800Z" fill="#505050" /></Icon>
        <Omnibox>
          <Icon $w={9} $h={12} viewBox="0 0 9 12"><rect y="4.500" width="9" height="7.500" rx="1" fill="#188038" /><path d="M2 5V3.500A2.500 2.500 0 0 1 7 3.500V5" fill="none" stroke="#188038" strokeWidth="1.500" /></Icon>
          <Secure w={71}>Защищено</Secure>
          <Rule $h={19} $l={7} $r={9} />
          <Scheme w={47}><b>https</b>://</Scheme>
          <Host w={144}>www.tours-tickets.com</Host>
          <Fit w={24}>/en</Fit>
          <Fit w={1033}>/museums/van-gogh-museum/?utm_source=TT_Amsterdam+on+Air&utm_medium=Affiliate&utm_content=linkgeneratorDeeplink&utm_campaign=TradeTrackerNL</Fit>
          <Push />
          <Icon $w={14} viewBox="0 0 14 14"><path d="M7 1L8.800 5.100L13.200 5.500L9.900 8.400L10.900 12.700L7 10.400L3.100 12.700L4.100 8.400L.8 5.500L5.200 5.100Z" fill="none" stroke="#444" strokeWidth="1.400" /></Icon>
        </Omnibox>
        <Extensions>
          <Icon $w={16} viewBox="0 0 16 16"><path d="M8 0Q14 4 16 13Q8 18 0 13Q2 4 8 0Z" fill="#4a93ad" /><path d="M8 2Q13 6 13 13Q8 15 3 13Q3 6 8 2Z" fill="#e9eff1" /><ellipse cx="8" cy="9" rx="2.500" ry="3.800" fill="#fff" stroke="#4b5960" strokeWidth="1.500" /></Icon>
          <Icon $w={16} viewBox="0 0 16 16"><rect width="16" height="16" fill="#c3060d" /><path d="M3 13L9 7" stroke="#fff" strokeWidth="2.500" /><path d="M9.500 6.500L11.500 4.500M6 3V5M12.500 8H14M4 6L5.500 6.500M11 2V3M13 5H15" stroke="#fff" strokeWidth="1.500" /></Icon>
          <Icon $w={16} viewBox="0 0 16 16"><rect width="16" height="16" rx="2" fill="#e2e4e6" /><text x="3.500" y="12" fontSize="11" fontWeight="900" fontFamily="Roboto, sans-serif" fill="#0b3a75">B</text><rect x="11.500" y="10" width="2" height="2" fill="#16a6e0" /></Icon>
          <Icon $w={16} viewBox="0 0 16 16"><defs><linearGradient id="hg" x1="0" y1="0" x2="0" y2="1"><stop offset="0" stopColor="#b04bb5" /><stop offset="1" stopColor="#fb6a50" /></linearGradient></defs><path d="M8 15L1.800 8Q-.5 4 2.500 2Q5.500 .2 8 3.500Q10.500 .2 13.500 2Q16.500 4 14.200 8Z" fill="none" stroke="url(#hg)" strokeWidth="1.200" /></Icon>
          <Icon $w={16} viewBox="0 0 16 16"><circle cx="8" cy="8" r="7.400" fill="#fff" stroke="#e3a5a5" strokeWidth="1" /><rect x="3" y="3" width="10" height="10" rx="2.500" fill="#d8475f" /><path d="M4 12.500L8 8L12 12.500Z" fill="#f5a53e" /><rect x="4" y="3.500" width="5" height="3" fill="#7d52b5" /><circle cx="8" cy="8" r="2" fill="#f5a24d" stroke="#8aa35a" strokeWidth=".8" /></Icon>
          <Icon $w={16} viewBox="0 0 16 16"><path d="M3 2.500A7 7 0 1 0 13 2.500" fill="none" stroke="#3d3d3d" strokeWidth="2.200" /><path d="M12 0L16 2L13 5Z" fill="#3d3d3d" /><text x="5.200" y="11" fontSize="10" fontWeight="700" fontFamily="Roboto, sans-serif" fill="#15b53e">$</text></Icon>
          <Icon $w={16} viewBox="0 0 16 16"><path d="M0 14L2 11H14L16 14Z" fill="#b5b5b5" /><path d="M3 10L5 5L3 3L8 5L11 2L14 4L13 11H5Z" fill="#a5a5a5" /><path d="M7 7L11 9M9 5L12 7" stroke="#ddd" /></Icon>
          <Icon $w={16} viewBox="0 0 16 16"><g fill="#555"><circle cx="7" cy="3" r="1.700" /><circle cx="7" cy="8" r="1.700" /><circle cx="7" cy="13" r="1.700" /></g></Icon>
        </Extensions>
      </Toolbar>
      <BookmarkBar>
        <FolderIcon /><BookmarkText w={109} fade>Обучение Андрі</BookmarkText>
        <SiteIcon $w={16} viewBox="0 0 16 16"><rect width="16" height="16" fill="#e5090d" /><path d="M5 2.500H11V13.500H5V11H8V8.500L5 8Z" fill="#fff" /></SiteIcon>
        <BookmarkText w={109} fade>Базы защитника</BookmarkText>
        <FolderIcon /><BookmarkText w={109} fade>Второе высшее</BookmarkText>
        <FolderIcon /><BookmarkText w={109} fade>Второе высшее</BookmarkText>
        <FolderIcon /><BookmarkText w={61}>СУБД Н2</BookmarkText>
        <Push />
        <Rule $h={19} $l={0} $r={11} />
        <FolderIcon /><Gap $w={13} /><Fit w={120}>Другие закладки</Fit>
      </BookmarkBar>
    </>
  );
}

function SitePage() {
  return (
    <Page>
      <SiteHeader>
        <Logo viewBox="0 0 198 26">
          <g fontFamily="Roboto, sans-serif" fontWeight="800" fontSize="33.500" fill="#e40a1e" stroke="#e40a1e" strokeWidth=".5">
            <text x="0" y="25" textLength="75" lengthAdjust="spacingAndGlyphs">TOURS</text>
            <text x="81" y="25" textLength="17" lengthAdjust="spacingAndGlyphs" fill="#1c4592" stroke="#1c4592">&amp;</text>
            <text x="103" y="25" textLength="94" lengthAdjust="spacingAndGlyphs">TICKETS</text>
          </g>
        </Logo>
        <Push />
        <HeaderButton $w={97} $bg="#f5f5f5" $fg="#5d5d5d"><Fit w={77}>€ EUR / EN</Fit></HeaderButton>
        <HeaderButton $w={109} $bg="#18428f">
          <Icon $w={17} $h={15} viewBox="0 0 17 15"><path d="M8.500 15L1.500 8Q-1 4.500 1.500 1.500Q5-1 8.500 2.500Q12-1 15.500 1.500Q18 4.500 15.500 8Z" fill="#fff" /></Icon>
          <Gap $w={4} /><Fit w={44}>Saved</Fit><Count>0</Count>
        </HeaderButton>
        <HeaderButton $w={94} $bg="#e4001f">
          <Icon $w={16} $h={14} viewBox="0 0 16 14"><path d="M0 0H3L3.500 1.500H16L15 8L5 9L5.200 10H14V11H4L2.200 1.500H0Z" fill="#fff" /><circle cx="5.500" cy="12.500" r="1.500" fill="#fff" /><circle cx="12.500" cy="12.500" r="1.500" fill="#fff" /></Icon>
          <Gap $w={3} /><Fit w={31}>Cart</Fit><Count>0</Count>
        </HeaderButton>
      </SiteHeader>
      <Columns>
        <Article>
          <Para $mt={-13}><Fit w={608}>Van Gogh ticket with a canal cruise through the city center of Amsterdam with our <Link>combi discount tickets</Link>.</Fit></Para>
          <Para $bold $mt={44}><Fit w={694}>Save money and combine your Van Gogh ticket with a canal cruise through the city center of Amsterdam. <Link>Click here</Link> for</Fit></Para>
          <Para $bold><Fit w={218}>more information and to view tickets.</Fit></Para>
          <Divider />
          <Heading><Fit w={143}>Museumplein 6</Fit></Heading>
          <MapBox>
            <CityMap />
            <MapControl $x={10} $y={10} $w={105} $h={29}>
              <TypeButton $on $w={46}>Карта</TypeButton><TypeButton $w={59}>Спутник</TypeButton>
            </MapControl>
            <MapControl $x={658} $y={10} $w={25} $h={25}>
              <Icon $w={15} viewBox="0 0 15 15"><path d="M1 5V1H5M10 1H14V5M14 10V14H10M5 14H1V10" fill="none" stroke="#666" strokeWidth="2" /></Icon>
            </MapControl>
            <InfoWindow $x={278} $y={72} $w={142} $h={36}>
              <Fit w={89}>Museumplein 6</Fit>
              <Icon $w={10} viewBox="0 0 10 10"><path d="M1 1L9 9M9 1L1 9" stroke="#888" strokeWidth="2" /></Icon>
            </InfoWindow>
            <Tail viewBox="0 0 28 26">
              <path d="M3 2L13 24L23 2Z" fill="#fff" />
              <path d="M3.500 3L13 23.500L22.500 3" fill="none" stroke="#a5a5a5" strokeWidth="1.200" />
            </Tail>
            <MapControl $x={659} $y={233} $w={28} $h={28}>
              <Icon $w={12} $h={20} viewBox="0 0 12 20"><circle cx="6" cy="3.500" r="3" fill="#f0a92b" stroke="#b97c14" strokeWidth=".6" /><path d="M2.500 7H9.500L11.500 13H9.500L8.500 19.500H3.500L2.500 13H.5Z" fill="#f0a92b" stroke="#b97c14" strokeWidth=".6" /><path d="M4 7L6 11L8 7Z" fill="#b97c14" /></Icon>
            </MapControl>
            <MapControl $col $x={659} $y={271} $w={28} $h={55}>
              <Icon $w={11} viewBox="0 0 11 11"><path d="M0 5.500H11M5.500 0V11" stroke="#555" strokeWidth="2.500" /></Icon>
              <ZoomDivider />
              <Icon $w={11} viewBox="0 0 11 11"><path d="M0 5.500H11" stroke="#555" strokeWidth="2.500" /></Icon>
            </MapControl>
            <Attribution>
              <Fit w={196}>Картографические данные © 2018 Google</Fit>
              <Fit w={115}>Условия использования</Fit>
              <Fit w={142}>Сообщить об ошибке на карте</Fit>
            </Attribution>
          </MapBox>
        </Article>
        <Sidebar>
          <Slots>
            {SLOTS.map(([time, left]) => (
              <Slot key={time} $off={!left}>
                <Radio $off={!left} $on={time === "18:30"} />
                <Time>{time}</Time>
                <span>{left ? `( ${left} Tickets left )` : "( Sold out )"}</span>
              </Slot>
            ))}
          </Slots>
        </Sidebar>
      </Columns>
      <CookieBar>
        <Fit w={1418}>To ensure you the best experience, we use cookies on our website for technical, analytical and marketing purposes. By continuing to browse our site, you are agreeing to our use of cookies.</Fit>
        <MoreInfo w={71}>More info</MoreInfo>
        <GotIt><Fit w={45}>Got it!</Fit></GotIt>
      </CookieBar>
    </Page>
  );
}

function BottomPanel() {
  return (
    <Panel $h={24}>
      <Gap $w={4} />
      <Icon $w={16} viewBox="0 0 16 16"><path d="M.5 1.500H6L7.500 3.500H15.500V15.500H.5Z" fill="#a9ab93" stroke="#686b54" /><rect x="3" y="6" width="10" height="8" rx="1" fill="#d5d6c6" stroke="#686b54" strokeWidth=".8" /><rect x="6" y="8" width="4" height="5" fill="none" stroke="#686b54" /></Icon>
      <Gap $w={7} />
      <Icon $w={4} $h={10} viewBox="0 0 4 10"><path d="M0 1H4M0 5H4M0 9H4" stroke="#aaa" /></Icon>
      <Gap $w={11} />
      <Task $w={219} $gap={9}>
        <Icon $w={15} viewBox="0 0 15 15"><circle cx="7.500" cy="7.500" r="7.500" fill="#2397d3" /><path d="M2.500 7.500L12 3.500L10.500 11.500L7.500 9.500L6 11L5.800 8.500Z" fill="#fff" /></Icon>
        <Fit w={84}>Telegram (4)</Fit>
      </Task>
      <Task $w={221} $active $pl={7} $gap={9}>
        <ChromiumIcon size={14} />
        <Fit w={180}>Visit the famous Van Go…</Fit>
      </Task>
      <Task $w={228} $pl={10} $gap={8}>
        <Icon $w={16} viewBox="0 0 16 16"><path d="M.5 1.500H6L7.500 3.500H15.500V15.500H.5Z" fill="#8b8d74" stroke="#62644e" /><path d="M1 5.500H15.500V15.500H.8Z" fill="#c3c5ae" stroke="#62644e" /></Icon>
        <Fit w={69}>Писанина</Fit>
      </Task>
      <Task $w={240} $pl={8} $gap={9}>
        <Icon $w={14} $h={16} viewBox="0 0 14 16"><path d="M.7 .7H9L13.300 5V15.300H.7Z" fill="#fff" stroke="#125a85" strokeWidth="1.300" /><path d="M9 0H14V5Z" fill="#1a87bd" /><path d="M3 7.500H8M3 10H11M3 12.500H11" stroke="#1a78ab" strokeWidth="1.300" /></Icon>
        <Fit w={182}>что смотреть-Бельгия.d…</Fit>
      </Task>
      <Push />
      <Workspaces>
        <Workspace $on><ChromiumIcon size={14} /></Workspace><Workspace /><Workspace /><Workspace />
      </Workspaces>
      <Gap $w={4} />
      <Icon $w={20} $h={21} viewBox="0 0 20 21"><path d="M2 3H18L16.500 20H3.500Z" fill="#aaa" stroke="#444" /><path d="M5 5L6 19M8.500 5L9 19M12 5L11.500 19M15.500 5L14.500 19M3 9H17M3 13H17M3.500 17H16.500" stroke="#555" strokeWidth=".8" /><ellipse cx="10" cy="3" rx="9" ry="2.500" fill="#e2e2e2" stroke="#444" /></Icon>
      <Gap $w={3} />
    </Panel>
  );
}

export default function App() {
  return (
    <Desktop>
      <Global />
      <TopPanel />
      <Window>
        <Browser />
        <Viewport>
          <SitePage />
          <Scrollbar><Arrow $up /><Thumb /><Arrow /></Scrollbar>
        </Viewport>
      </Window>
      <BottomPanel />
      <Tooltip><Fit w={63}>Facebook</Fit></Tooltip>
      <Cursor viewBox="0 0 14 21"><path d="M1 1V16.500L4.600 13.200L7.200 19.500L10 18.200L7.400 12.200H12.500Z" fill="#fff" stroke="#000" strokeWidth="1.300" /></Cursor>
    </Desktop>
  );
}
